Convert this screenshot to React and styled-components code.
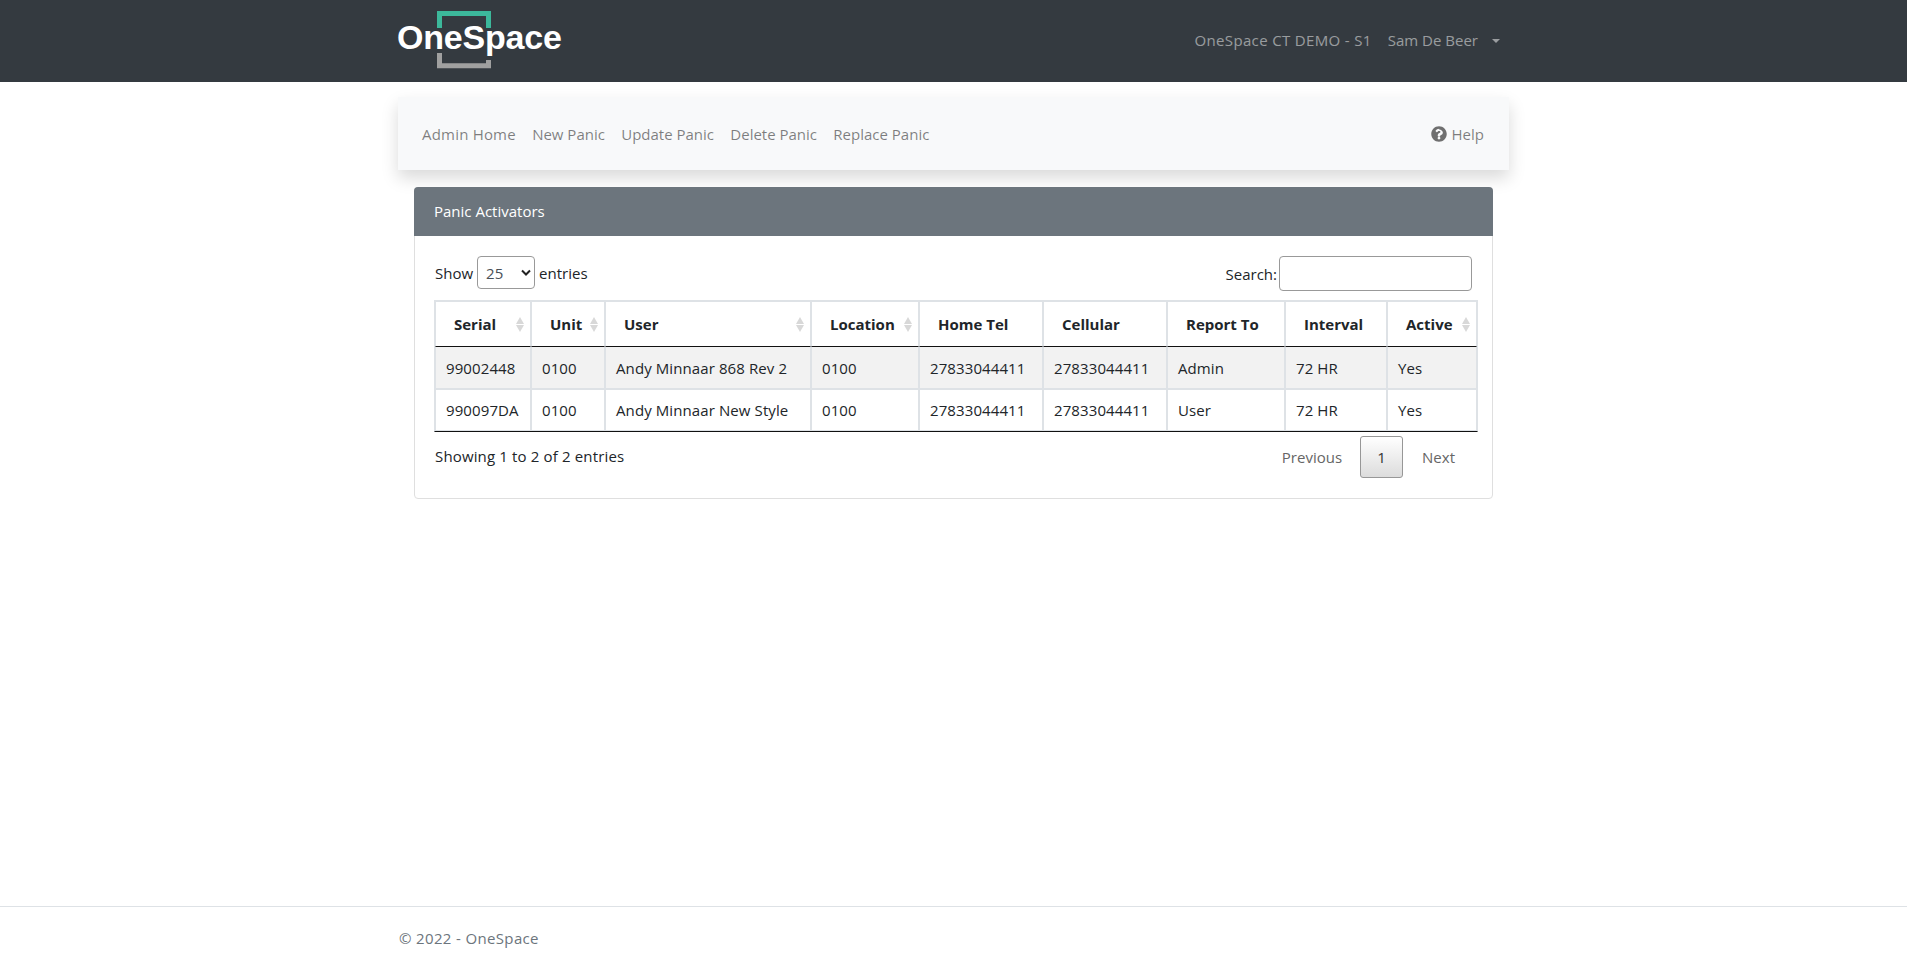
import styled, { createGlobalStyle } from "styled-components";

const GlobalStyle = createGlobalStyle`
  * { box-sizing: border-box; }
  html, body { margin: 0; padding: 0; background: #fff; }
  body {
    font-family: "Open Sans", "Noto Sans", sans-serif;
    font-size: 15px;
    line-height: 24px;
    color: #212529;
  }
`;

const Page = styled.div`
  min-height: 962px;
  display: flex;
  flex-direction: column;
`;

const TopBar = styled.header`
  height: 82px;
  background: #343a40;
`;

const Container = styled.div`
  width: 1140px;
  margin: 0 384px 0 383px;
  padding: 0 15px;
`;

const TopInner = styled(Container)`
  height: 100%;
  display: flex;
  align-items: center;
  justify-content: space-between;
`;

const Logo = styled.a`
  position: relative;
  display: block;
  width: 166px;
  height: 82px;
  font-family: "Liberation Sans", Arial, sans-serif;
  font-weight: 700;
  font-size: 34px;
  line-height: 74px;
  letter-spacing: -0.2px;
  color: #fff;

  svg {
    position: absolute;
    left: 39px;
    top: 11px;
  }

  span {
    position: relative;
    margin-left: -1px;
  }
`;

const TopLinks = styled.nav`
  display: flex;
  align-items: center;
  gap: 16px;
  padding-right: 8px;
  margin-top: -3px;
  color: rgba(255, 255, 255, 0.5);
`;

const ServerName = styled.span`
  letter-spacing: 0.35px;
`;

const Caret = styled.span`
  display: inline-block;
  margin-left: 14px;
  vertical-align: 3px;
  border-top: 4.8px solid currentColor;
  border-left: 4.8px solid transparent;
  border-right: 4.8px solid transparent;
`;

const SubNav = styled.nav`
  height: 73px;
  margin: 15px -1px 0 0;
  padding: 0 25px 0 24px;
  display: flex;
  align-items: center;
  justify-content: space-between;
  background: #f8f9fa;
  box-shadow: 0 8px 16px rgba(0, 0, 0, 0.15);
  color: rgba(0, 0, 0, 0.5);
`;

const SubLinks = styled.div`
  display: flex;
  gap: 16.3px;

  a:first-child {
    letter-spacing: 0.2px;
  }
`;

const HelpLink = styled.a`
  display: flex;
  align-items: center;
  gap: 5px;

  svg {
    display: block;
  }
`;

const Card = styled.section`
  margin: 17px 15px 0 16px;
  border: 1px solid #dfdfdf;
  border-radius: 4px;
  height: 312px;
`;

const CardHeader = styled.div`
  height: 49px;
  margin: -1px -1px 0;
  padding: 12px 20px;
  background: #6c757d;
  color: #fff;
  border-radius: 4px 4px 0 0;
`;

const CardBody = styled.div`
  padding: 20px;
`;

const ToolRow = styled.div`
  display: flex;
  align-items: flex-start;
  justify-content: space-between;
  height: 35px;
`;

const LengthLabel = styled.label`
  display: flex;
  align-items: center;
  gap: 4px;
  height: 33px;
`;

const LengthSelect = styled.select`
  appearance: none;
  width: 58px;
  height: 33px;
  padding: 0 0 0 8px;
  font: inherit;
  color: #495057;
  border: 1px solid #999;
  border-radius: 4px;
  background: #fff
    url("data:image/svg+xml,%3Csvg xmlns='http://www.w3.org/2000/svg' width='10' height='7' viewBox='0 0 10 7'%3E%3Cpath d='M1 1.500l4 4 4-4' fill='none' stroke='%23222' stroke-width='2'/%3E%3C/svg%3E")
    no-repeat 43px 12px;
`;

const SearchLabel = styled.label`
  display: flex;
  align-items: center;
  gap: 2px;
  height: 35px;
`;

const SearchInput = styled.input`
  width: 193px;
  height: 35px;
  border: 1px solid #999;
  border-radius: 4px;
`;

const Table = styled.table`
  width: 1044px;
  margin: 9px 0 0 -1px;
  table-layout: fixed;
  border-collapse: separate;
  border-spacing: 0;
  border: 1px solid #dee2e6;
  border-bottom-color: #111;
`;

const Head = styled.th`
  position: relative;
  height: 46px;
  padding: 0 0 0 18px;
  text-align: left;
  font-weight: 700;
  color: #212529;
  border: 1px solid #dee2e6;
  border-bottom-color: #111;
  white-space: nowrap;
`;

const Cell = styled.td`
  height: 42px;
  padding: 0 0 0 10px;
  border: 1px solid #dee2e6;
  border-top-width: ${(p) => (p.$first ? 0 : 1)}px;
  background: ${(p) => (p.$first ? "#f2f2f2" : "#fff")};
  letter-spacing: 0.1px;
  white-space: nowrap;
`;

const SortIcon = styled.svg`
  position: absolute;
  right: 6px;
  top: 15px;
`;

const FootRow = styled.div`
  display: flex;
  align-items: flex-start;
  justify-content: space-between;
  width: 1044px;
  padding-top: 4px;
`;

const Info = styled.div`
  padding-top: 8px;
  letter-spacing: 0.15px;
`;

const Pager = styled.div`
  display: flex;
  align-items: center;
  padding-right: 5px;
  color: #666;
`;

const PageLink = styled.a`
  padding: 0 19px;

  &:first-child {
    padding-right: 18px;
  }
`;

const PageCurrent = styled.a`
  width: 43px;
  height: 42px;
  display: flex;
  align-items: center;
  justify-content: center;
  color: #333;
  border: 1px solid #979797;
  border-radius: 3px;
  background: linear-gradient(to bottom, #fff 0%, #dcdcdc 100%);
`;

const Footer = styled.footer`
  margin-top: auto;
  height: 56px;
  padding-top: 19px;
  border-top: 1px solid #dee2e6;
  color: #6c757d;
  letter-spacing: 0.35px;
`;

const FooterInner = styled(Container)`
  padding-left: 16px;
`;

const columns = [
  { label: "Serial", width: 96, sort: true },
  { label: "Unit", width: 74, sort: true },
  { label: "User", width: 206, sort: true },
  { label: "Location", width: 108, sort: true },
  { label: "Home Tel", width: 124 },
  { label: "Cellular", width: 124 },
  { label: "Report To", width: 118 },
  { label: "Interval", width: 102 },
  { label: "Active", width: 90, sort: true },
];

const rows = [
  ["99002448", "0100", "Andy Minnaar 868 Rev 2", "0100", "27833044411", "27833044411", "Admin", "72 HR", "Yes"],
  ["990097DA", "0100", "Andy Minnaar New Style", "0100", "27833044411", "27833044411", "User", "72 HR", "Yes"],
];

const subLinks = ["Admin Home", "New Panic", "Update Panic", "Delete Panic", "Replace Panic"];

function App() {
  return (
    <Page>
      <GlobalStyle />
      <TopBar>
        <TopInner>
          <Logo>
            <svg width="54" height="58" viewBox="0 0 54 58">
              <path d="M2.500 17V2.500H51.500V17" fill="none" stroke="#3cb89b" strokeWidth="5" />
              <path d="M2.500 42V54.700H51.500V49" fill="none" stroke="#a0a0a0" strokeWidth="5" />
            </svg>
            <span>OneSpace</span>
          </Logo>
          <TopLinks>
            <ServerName>OneSpace CT DEMO - S1</ServerName>
            <span>
              Sam De Beer
              <Caret />
            </span>
          </TopLinks>
        </TopInner>
      </TopBar>

      <Container>
        <SubNav>
          <SubLinks>
            {subLinks.map((link) => (
              <a key={link}>{link}</a>
            ))}
          </SubLinks>
          <HelpLink>
            <svg width="16" height="16" viewBox="0 0 512 512" fill="#6f6f6f">
              <path d="M504 256c0 137-111 248-248 248S8 393 8 256C8 119 119 8 256 8s248 111 248 248zM262.700 90c-54.500 0-89.300 23-116.500 63.800-3.500 5.300-2.400 12.400 2.700 16.300l34.700 26.300c5.200 3.900 12.600 3 16.700-2.100 17.900-22.700 30.100-35.800 57.300-35.800 20.400 0 45.700 13.100 45.700 33 0 15-12.400 22.700-32.600 34-23.600 13.200-54.800 29.700-54.800 70.900V320c0 6.600 5.400 12 12 12h56c6.600 0 12-5.400 12-12v-1.300c0-28.600 83.500-29.800 83.500-107.200 0-58.300-60.500-102.500-117.200-102.500zM256 340c-25.400 0-46 20.600-46 46s20.600 46 46 46 46-20.600 46-46-20.600-46-46-46z" />
            </svg>
            Help
          </HelpLink>
        </SubNav>

        <Card>
          <CardHeader>Panic Activators</CardHeader>
          <CardBody>
            <ToolRow>
              <LengthLabel>
                Show
                <LengthSelect defaultValue="25">
                  <option>10</option>
                  <option>25</option>
                  <option>50</option>
                  <option>100</option>
                </LengthSelect>
                entries
              </LengthLabel>
              <SearchLabel>
                Search:
                <SearchInput type="search" />
              </SearchLabel>
            </ToolRow>

            <Table>
              <colgroup>
                {columns.map((col) => (
                  <col key={col.label} style={{ width: col.width }} />
                ))}
              </colgroup>
              <thead>
                <tr>
                  {columns.map((col) => (
                    <Head key={col.label}>
                      {col.label}
                      {col.sort && (
                        <SortIcon width="8" height="15" viewBox="0 0 8 15" fill="#d8d8d8">
                          <path d="M4 0L8 7H0Z" />
                          <path d="M4 15L8 8H0Z" />
                        </SortIcon>
                      )}
                    </Head>
                  ))}
                </tr>
              </thead>
              <tbody>
                {rows.map((row, i) => (
                  <tr key={row[0]}>
                    {row.map((value, j) => (
                      <Cell key={j} $first={i === 0}>
                        {value}
                      </Cell>
                    ))}
                  </tr>
                ))}
              </tbody>
            </Table>

            <FootRow>
              <Info>Showing 1 to 2 of 2 entries</Info>
              <Pager>
                <PageLink>Previous</PageLink>
                <PageCurrent>1</PageCurrent>
                <PageLink>Next</PageLink>
              </Pager>
            </FootRow>
          </CardBody>
        </Card>
      </Container>

      <Footer>
        <FooterInner>© 2022 - OneSpace</FooterInner>
      </Footer>
    </Page>
  );
}

export default App;
